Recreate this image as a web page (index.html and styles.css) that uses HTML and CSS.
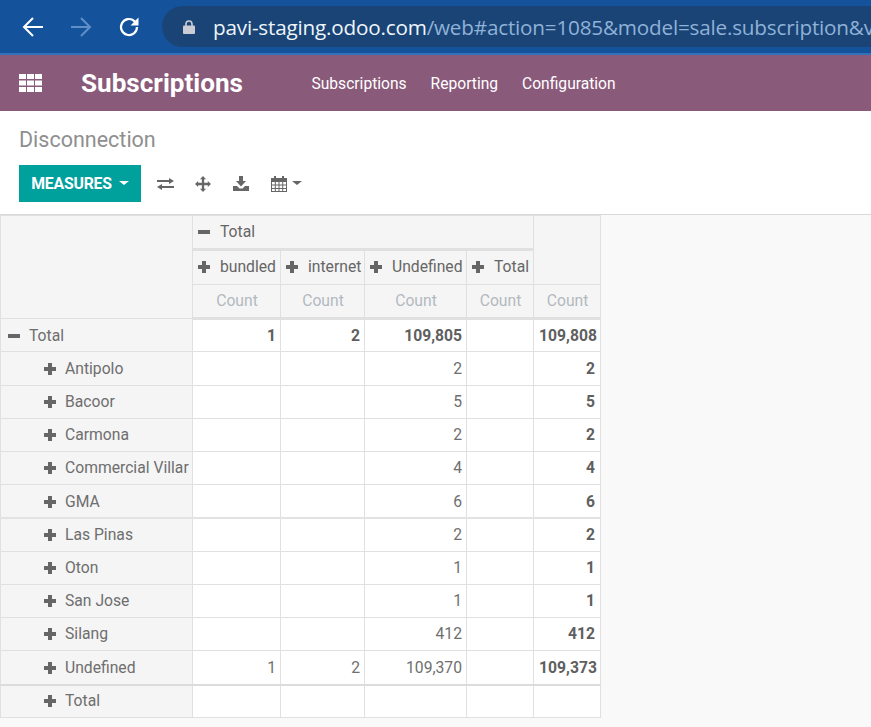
FILE: index.html
```html
<!DOCTYPE html>
<html lang="en">
<head>
<meta charset="utf-8">
<title>Subscriptions</title>
<link rel="stylesheet" href="styles.css">
</head>
<body>
<header class="chrome">
  <svg class="nav-icon" width="24" height="24" viewBox="0 0 24 24"><path d="M22 12H3.500M12 3 3 12l9 9" fill="none" stroke="#fff" stroke-width="2"/></svg>
  <svg class="nav-icon dim" width="24" height="24" viewBox="0 0 24 24"><path d="M2 12h18.500M12 3l9 9-9 9" fill="none" stroke="#5f8fc6" stroke-width="2"/></svg>
  <svg class="nav-icon" width="24" height="24" viewBox="0 0 24 24"><path d="M20 12a8 8 0 1 1-2.600-5.900L20 8.500" fill="none" stroke="#fff" stroke-width="2.200"/><path d="M21.500 2.500v8h-8z" fill="#fff"/></svg>
  <div class="address">
    <svg class="lock" width="12" height="14" viewBox="0 0 12 14"><path d="M3 6V4a3 3 0 0 1 6 0v2" fill="none" stroke="#c9ccd2" stroke-width="1.600"/><rect x="0" y="5.500" width="12" height="8.500" rx="1" fill="#c9ccd2"/></svg>
    <span class="url"><span class="host">pavi-staging.odoo.com</span>/web#action=1085&amp;model=sale.subscription&amp;v</span>
  </div>
</header>
<nav class="appbar">
  <svg class="apps" width="23" height="18" viewBox="0 0 23 18"><path fill="#fff" d="M0 0h7v5H0zM8 0h7v5H8zM16 0h7v5h-7zM0 6.500h7v5H0zM8 6.500h7v5H8zM16 6.500h7v5h-7zM0 13h7v5H0zM8 13h7v5H8zM16 13h7v5h-7z"/></svg>
  <span class="brand">Subscriptions</span>
  <ul class="menu">
    <li>Subscriptions</li>
    <li>Reporting</li>
    <li>Configuration</li>
  </ul>
</nav>
<section class="control">
  <h1 class="title">Disconnection</h1>
  <div class="tools">
    <button class="primary">MEASURES <i class="caret"></i></button>
    <svg class="tool flip" width="17" height="12" viewBox="0 0 17 12"><path fill="#666" d="M0 2h12V0l5 3-5 3V4H0zM17 8H5V6l-5 3 5 3v-2h12z"/></svg>
    <svg class="tool move" width="16" height="16" viewBox="0 0 18 18"><path fill="#666" d="M9 0l3.400 3.600H10.300V7.700h4.100V5.600L18 9l-3.600 3.400v-2.100H10.300v4.100h2.100L9 18l-3.400-3.600h2.100V10.300H3.600v2.100L0 9l3.600-3.400v2.100h4.100V3.600H5.600z"/></svg>
    <svg class="tool down" width="16" height="15" viewBox="0 0 16 15"><path fill="#666" d="M6 0h4v5h3L8 10.500 3 5h3zM0 10h4l2.500 2.500h3L12 10h4v5H0z"/></svg>
    <span class="tool-group">
      <svg width="16" height="16" viewBox="0 0 16 16"><path fill="#666" d="M0 2h3V0h2v2h6V0h2v2h3v14H0zM1 6v2.500h2.800V6zm3.800 0v2.500h2.700V6zm3.700 0v2.500h2.700V6zm3.700 0v2.500H15V6zM1 9.500V12h2.800V9.500zm3.800 0V12h2.700V9.500zm3.700 0V12h2.700V9.500zm3.700 0V12H15V9.500zM1 13v2h2.800v-2zm3.800 0v2h2.700v-2zm3.700 0v2h2.700v-2zm3.700 0v2H15v-2z"/></svg>
      <i class="caret grey"></i>
    </span>
  </div>
</section>
<main class="content">
  <table class="pivot">
    <colgroup>
      <col class="c0"><col class="c1"><col class="c2"><col class="c3"><col class="c4"><col class="c5">
    </colgroup>
    <thead>
      <tr class="h1">
        <th rowspan="3" class="corner"></th>
        <th colspan="4" class="lead thick-b"><i class="sign minus"></i>Total</th>
        <th rowspan="2" class="blank"></th>
      </tr>
      <tr class="h2">
        <th class="lead"><i class="sign plus"></i>bundled</th>
        <th class="lead"><i class="sign plus"></i>internet</th>
        <th class="lead"><i class="sign plus"></i>Undefined</th>
        <th class="lead"><i class="sign plus"></i>Total</th>
      </tr>
      <tr class="h3">
        <th class="meas">Count</th><th class="meas">Count</th><th class="meas">Count</th><th class="meas">Count</th><th class="meas">Count</th>
      </tr>
    </thead>
    <tbody>
      <tr class="strong"><th class="row"><i class="sign minus"></i>Total</th><td>1</td><td>2</td><td>109,805</td><td></td><td class="end">109,808</td></tr>
      <tr class="tall"><th class="row sub"><i class="sign plus"></i>Antipolo</th><td></td><td></td><td>2</td><td></td><td class="b end">2</td></tr>
      <tr class="up"><th class="row sub"><i class="sign plus"></i>Bacoor</th><td></td><td></td><td>5</td><td></td><td class="b end">5</td></tr>
      <tr class="up"><th class="row sub"><i class="sign plus"></i>Carmona</th><td></td><td></td><td>2</td><td></td><td class="b end">2</td></tr>
      <tr class="up"><th class="row sub"><i class="sign plus"></i>Commercial Villar</th><td></td><td></td><td>4</td><td></td><td class="b end">4</td></tr>
      <tr class="down"><th class="row sub"><i class="sign plus"></i>GMA</th><td></td><td></td><td>6</td><td></td><td class="b end">6</td></tr>
      <tr class="tall sep"><th class="row sub"><i class="sign plus"></i>Las Pinas</th><td></td><td></td><td>2</td><td></td><td class="b end">2</td></tr>
      <tr class="up"><th class="row sub"><i class="sign plus"></i>Oton</th><td></td><td></td><td>1</td><td></td><td class="b end">1</td></tr>
      <tr class="up"><th class="row sub"><i class="sign plus"></i>San Jose</th><td></td><td></td><td>1</td><td></td><td class="b end">1</td></tr>
      <tr class="up"><th class="row sub"><i class="sign plus"></i>Silang</th><td></td><td></td><td>412</td><td></td><td class="b end">412</td></tr>
      <tr class="tall"><th class="row sub"><i class="sign plus"></i>Undefined</th><td>1</td><td>2</td><td>109,370</td><td></td><td class="b end">109,373</td></tr>
      <tr class="last up"><th class="row sub"><i class="sign plus"></i>Total</th><td></td><td></td><td></td><td></td><td></td></tr>
    </tbody>
  </table>
</main>
</body>
</html>
```
FILE: styles.css
```css
* { box-sizing: border-box; }
html, body { margin: 0; padding: 0; }
body { width: 871px; height: 727px; overflow: hidden; background: #f9f9f9; font-family: Roboto, "Noto Sans", sans-serif; color: #666; }

.chrome { height: 55px; background: #14539c; border-bottom: 2px solid #2f72b8; display: flex; align-items: center; padding: 0 0 0 21px; gap: 24px; overflow: hidden; }
.nav-icon { flex: none; }
.address { flex: none; margin-left: -3px; width: 760px; height: 41px; border-radius: 21px; background: #1a4476; display: flex; align-items: center; padding-left: 21px; gap: 18px; white-space: nowrap; }
.lock { flex: none; }
.url { font-family: "Open Sans", "Noto Sans", sans-serif; font-size: 20.700px; color: #8fb2d8; letter-spacing: -0.200px; }
.host { color: #eef5fb; }

.appbar { height: 56px; background: #8a5a7b; display: flex; align-items: center; padding-left: 19px; color: #fff; }
.apps { flex: none; }
.brand { margin-left: 39px; font-size: 26.100px; font-weight: 700; width: 192px; flex: none; }
.menu { list-style: none; margin: 2px 0 0 38.500px; padding: 0; display: flex; gap: 24px; font-size: 15.600px; }

.control { height: 104px; background: #fff; border-bottom: 1px solid #d9d9d9; padding: 16px 0 0 19px; }
.title { margin: 0; font-size: 21.500px; line-height: 26px; font-weight: 400; color: #8f8f8f; }
.tools { margin-top: 12px; display: flex; align-items: center; height: 37px; }
.primary { width: 122px; height: 37px; border: 0; background: #00a09d; color: #fff; font: 700 15.800px Roboto, sans-serif; letter-spacing: -0.200px; padding: 0; display: flex; align-items: center; justify-content: center; gap: 7px; }
.caret { display: inline-block; width: 0; height: 0; border-left: 5px solid transparent; border-right: 5px solid transparent; border-top: 4px solid #fff; margin-top: -2px; }
.caret.grey { border-top-color: #666; margin-left: 5px; }
.tool.flip { margin-left: 16px; }
.tool.move { margin-left: 21px; }
.tool.down { margin-left: 22px; }
.tool-group { margin-left: 22px; display: flex; align-items: center; }

.content { padding: 0; }
.pivot { border-collapse: collapse; table-layout: fixed; width: 600px; font-size: 15.700px; background: #fff; color: #666; margin-top: 0; }
.c0 { width: 192px; }
.c1 { width: 88px; }
.c2 { width: 84px; }
.c3 { width: 102px; }
.c4 { width: 67px; }
.c5 { width: 67px; }
.pivot th, .pivot td { border: 1px solid #e0e0e0; padding: 0 4px 0 5px; overflow: hidden; white-space: nowrap; font-weight: 400; }
.pivot thead th { background: #f5f5f5; padding-bottom: 2px; }
.h1 { height: 34px; }
.h2 { height: 35px; }
.h3 { height: 34px; }
.pivot thead th.lead { text-align: left; }
.pivot thead th.lead .sign { margin-right: 10px; }
.pivot th.thick-b { border-bottom: 3px solid #e0e0e0; }
.pivot thead .h3 th { border-bottom: 3px solid #e0e0e0; }
.pivot th.meas { text-align: center; color: #b3b9c0; }
.pivot tbody tr { height: 33px; }
.pivot tbody tr.tall { height: 34px; }
.pivot tbody th { background: #f5f5f5; text-align: left; }
.pivot tbody td { text-align: right; color: #6f6f6f; }
.pivot tbody td.end { padding-right: 5px; }
.pivot th.row { color: #6e6e6e; padding-left: 7px; }
.pivot th.sub { padding-left: 43px; }
.pivot tbody .strong td, .pivot tbody td.b { font-weight: 700; color: #5f5f5f; }
.pivot tbody .up th, .pivot tbody .up td { padding-bottom: 2px; }
.pivot tbody .down th, .pivot tbody .down td { padding-top: 2px; }
.last th, .last td { border-top: 2px solid #dcdcdc; }
.sep th, .sep td { border-top: 2px solid #e2e2e2; }

.sign { position: relative; display: inline-block; width: 12px; height: 12px; margin-right: 9px; vertical-align: -1px; }
.sign::before { content: ""; position: absolute; left: 0; right: 0; top: 4px; height: 4px; background: #666; }
.plus::after { content: ""; position: absolute; top: 0; bottom: 0; left: 4px; width: 4px; background: #666; }
```
